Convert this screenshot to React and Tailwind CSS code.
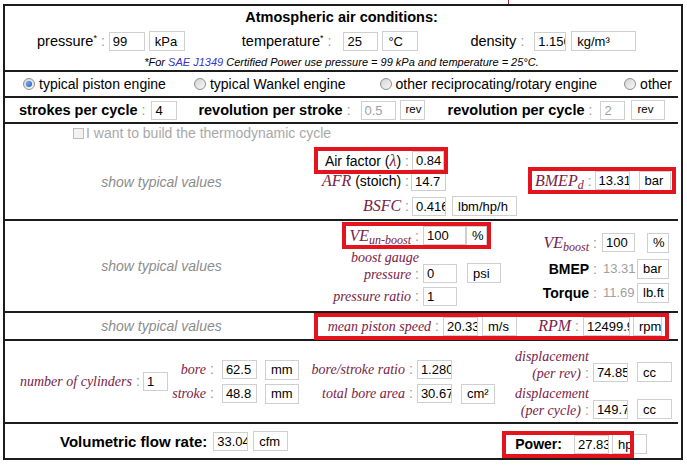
import React from 'react'

const LINE = 'border-b-2 border-[#1c1c1c]'
const SERIF = "font-['Liberation_Serif',serif] italic text-[#7b2145]"
const MATH = "font-['Liberation_Serif',serif] text-[16px] italic text-[#7b2145]"
const HINT = 'italic text-[#8c8c8c]'
const RED = 'outline-4 outline-[#e3141d]'

// gray separator between a label and its field
function Colon() {
  return <span className="ml-[4px] font-['Liberation_Sans',Arial,sans-serif] text-[14px] font-normal not-italic text-[#9a9a9a]">:</span>
}

function Num({ value, muted, className = '' }) {
  return (
    <input
      readOnly
      value={value}
      className={`h-[19px] shrink-0 border border-[#cfcfcf] bg-white pl-[3px] text-[13px] outline-none ${muted ? 'text-[#a0a0a0]' : 'text-black'} ${className}`}
    />
  )
}

function Unit({ children, small, className = '' }) {
  return (
    <span
      className={`flex h-[20px] shrink-0 items-center border border-[#cfcfcf] bg-white pl-[5px] text-black ${small ? 'text-[11.5px]' : 'text-[13px]'} ${className}`}
    >
      {children}
    </span>
  )
}

function Radio({ on, className = '' }) {
  return (
    <span className={`flex h-[12px] w-[12px] shrink-0 items-center justify-center rounded-full border border-[#8e8f8f] bg-[linear-gradient(135deg,#d4d4d4,#f8f8f8)] ${className}`}>
      {on && <span className="h-[6px] w-[6px] rounded-full bg-[radial-gradient(circle_at_35%_35%,#6fa8f0,#1d55b0)]" />}
    </span>
  )
}

function AirConditions() {
  return (
    <section className={`h-[66px] ${LINE}`}>
      <div className="flex h-[22px] items-center justify-center text-[14.5px] font-bold">Atmospheric air conditions:</div>
      <div className="flex h-[26px] items-center pl-[32px] text-[14.5px]">
        <span>pressure<sup className="text-[9px]">*</sup></span>
        <Colon />
        <Num value="99" className="ml-[4px] w-[36px]" />
        <Unit className="ml-[4px] w-[36px]">kPa</Unit>
        <span className="ml-[57px]">temperature<sup className="text-[9px]">*</sup></span>
        <Colon />
        <Num value="25" className="ml-[12px] w-[35px]" />
        <Unit className="ml-[4px] w-[36px]">°C</Unit>
        <span className="ml-[52px]">density</span>
        <Colon />
        <Num value="1.156" className="ml-[10px] w-[32px]" />
        <Unit className="ml-[5px] w-[65px]">kg/m³</Unit>
      </div>
      <p className="text-center text-[11px] italic leading-[16px]">
        *For <span className="text-[#3434c8]">SAE J1349</span> Certified Power use pressure = 99 kPa and temperature = 25°C.
      </p>
    </section>
  )
}

function EngineType() {
  return (
    <section className={`flex h-[26px] items-center pl-[18px] ${LINE}`}>
      <Radio on />
      <span className="ml-[4px]">typical piston engine</span>
      <Radio className="ml-[28px]" />
      <span className="ml-[4px]">typical Wankel engine</span>
      <Radio className="ml-[34px]" />
      <span className="ml-[4px]">other reciprocating/rotary engine</span>
      <Radio className="ml-[27px]" />
      <span className="ml-[4px]">other</span>
    </section>
  )
}

function Strokes() {
  return (
    <section className={`flex h-[26px] items-center pl-[14px] text-[14.5px] ${LINE}`}>
      <b>strokes per cycle</b>
      <Colon />
      <Num value="4" className="ml-[6px] w-[26px]" />
      <b className="ml-[21px]">revolution per stroke</b>
      <Colon />
      <Num value="0.5" muted className="ml-[10px] w-[35px]" />
      <Unit small className="ml-[4px] w-[25px]">rev</Unit>
      <b className="ml-[23px]">revolution per cycle</b>
      <Colon />
      <Num value="2" muted className="ml-[8px] w-[25px]" />
      <Unit small className="ml-[6px] w-[34px]">rev</Unit>
    </section>
  )
}

function Combustion() {
  return (
    <section className={`h-[97px] ${LINE}`}>
      <div className="flex h-[18px] items-center pl-[68px] text-[#a8a8a8]">
        <span className="h-[11px] w-[11px] border border-[#bdbdbd] bg-[#f2f2f2]" />
        <span className="ml-[2px]">I want to build the thermodynamic cycle</span>
      </div>
      <div className="flex h-[77px]">
        <div className={`flex w-[313px] items-center justify-center pt-[3px] ${HINT}`}>show typical values</div>
        <div className="w-[214px] pt-[9px]">
          <div className={`flex h-[19px] w-fit items-center ${RED}`}>
            <span className="w-[91px] text-right">
              Air factor (<span className={MATH}>λ</span>)<Colon />
            </span>
            <Num value="0.84" className="ml-[3px] w-[32px]" />
          </div>
          <div className="mt-[1px] flex h-[20px] items-center">
            <span className="w-[91px] text-right">
              <span className={MATH}>AFR</span> (stoich)<Colon />
            </span>
            <Num value="14.7" className="ml-[2px] w-[35px]" />
          </div>
          <div className="mt-[5px] flex h-[20px] items-center">
            <span className="w-[91px] text-right">
              <span className={MATH}>BSFC</span>
              <Colon />
            </span>
            <Num value="0.416" className="ml-[3px] w-[34px]" />
            <Unit className="ml-[6px] w-[65px]">lbm/hp/h</Unit>
          </div>
        </div>
        <div className="pt-[29px]">
          <div className={`flex h-[19px] w-[140px] items-center ${RED}`}>
            <span className="ml-[3px] whitespace-nowrap">
              <span className={MATH}>
                BMEP<sub>d</sub>
              </span>
              <Colon />
            </span>
            <Num value="13.31" className="ml-[3px] w-[35px]" />
            <Unit className="ml-[9px] w-[32px]">bar</Unit>
          </div>
        </div>
      </div>
    </section>
  )
}

function Boost() {
  return (
    <section className={`flex h-[92px] ${LINE}`}>
      <div className={`flex w-[313px] items-center justify-center ${HINT}`}>show typical values</div>
      <div className="w-[202px] pt-[5px]">
        <div className={`ml-[28px] flex h-[19px] w-[141px] items-center ${RED}`}>
          <span className="w-[73px] whitespace-nowrap text-right">
            <span className={MATH}>
              VE<sub>un-boost</sub>
            </span>
            <Colon />
          </span>
          <Num value="100" className="ml-[4px] w-[43px]" />
          <Unit className="w-[21px]">%</Unit>
        </div>
        <div className="mt-[4px] flex items-end">
          <span className={`w-[101px] text-right leading-[17px] ${SERIF}`}>
            boost gauge
            <br />
            pressure
            <Colon />
          </span>
          <Num value="0" className="ml-[4px] w-[34px]" />
          <Unit className="ml-[10px] w-[34px]">psi</Unit>
        </div>
        <div className="mt-[4px] flex h-[19px] items-center">
          <span className={`w-[101px] text-right ${SERIF}`}>
            pressure ratio
            <Colon />
          </span>
          <Num value="1" className="ml-[4px] w-[34px]" />
        </div>
      </div>
      <div className="pt-[12px]">
        <div className="flex h-[19px] items-center">
          <span className="w-[77px] whitespace-nowrap text-right">
            <span className={MATH}>
              VE<sub>boost</sub>
            </span>
            <Colon />
          </span>
          <Num value="100" className="ml-[5px] w-[33px]" />
          <Unit className="ml-[12px] w-[22px]">%</Unit>
        </div>
        <div className="mt-[7px] flex h-[19px] items-center">
          <span className="w-[77px] text-right">
            <b>BMEP</b>
            <Colon />
          </span>
          <span className="ml-[5px] w-[35px] pl-[1px] text-[13px] text-[#a0a0a0]">13.31</span>
          <Unit className="w-[32px]">bar</Unit>
        </div>
        <div className="mt-[5px] flex h-[19px] items-center">
          <span className="w-[77px] text-right">
            <b>Torque</b>
            <Colon />
          </span>
          <span className="ml-[5px] w-[33px] overflow-hidden whitespace-nowrap pl-[1px] text-[13px] text-[#a0a0a0]">11.69</span>
          <Unit className="ml-[2px] w-[32px]">lb.ft</Unit>
        </div>
      </div>
    </section>
  )
}

function Speed() {
  return (
    <section className={`flex h-[28px] items-center ${LINE}`}>
      <div className={`w-[313px] text-center ${HINT}`}>show typical values</div>
      <div className={`flex h-[19px] w-[347px] items-center ${RED}`}>
        <span className={`w-[121px] text-right ${SERIF}`}>
          mean piston speed
          <Colon />
        </span>
        <Num value="20.33" className="ml-[4px] w-[35px]" />
        <Unit className="ml-[4px] w-[35px]">m/s</Unit>
        <span className="w-[62px] text-right">
          <span className={MATH}>RPM</span>
          <Colon />
        </span>
        <Num value="12499.9" className="ml-[4px] w-[47px]" />
        <Unit className="ml-[3px] w-[29px]">rpm</Unit>
      </div>
    </section>
  )
}

function Geometry() {
  return (
    <section className={`flex h-[83px] ${LINE}`}>
      <div className="flex items-center pl-[15px]">
        <span className={SERIF}>
          number of cylinders
          <Colon />
        </span>
        <Num value="1" className="ml-[3px] w-[25px]" />
      </div>
      <div className="flex flex-col justify-center gap-[4px]">
        <div className="flex h-[20px] items-center">
          <span className={`w-[46px] text-right ${SERIF}`}>
            bore
            <Colon />
          </span>
          <Num value="62.5" className="ml-[8px] w-[35px]" />
          <Unit className="ml-[8px] w-[34px]">mm</Unit>
        </div>
        <div className="flex h-[20px] items-center">
          <span className={`w-[46px] text-right ${SERIF}`}>
            stroke
            <Colon />
          </span>
          <Num value="48.8" className="ml-[8px] w-[35px]" />
          <Unit className="ml-[8px] w-[34px]">mm</Unit>
        </div>
      </div>
      <div className="flex flex-col justify-center gap-[4px]">
        <div className="flex h-[20px] items-center">
          <span className={`w-[114px] text-right ${SERIF}`}>
            bore/stroke ratio
            <Colon />
          </span>
          <Num value="1.280" className="ml-[4px] w-[35px]" />
        </div>
        <div className="flex h-[20px] items-center">
          <span className={`w-[114px] text-right ${SERIF}`}>
            total bore area
            <Colon />
          </span>
          <Num value="30.67" className="ml-[4px] w-[35px]" />
          <Unit className="ml-[9px] w-[34px]">cm²</Unit>
        </div>
      </div>
      <div className="flex flex-col gap-[3px] pt-[7px]">
        <div className="flex items-end">
          <span className={`w-[94px] text-right leading-[17px] ${SERIF}`}>
            displacement
            <br />
            (per rev)
            <Colon />
          </span>
          <Num value="74.85" className="ml-[4px] w-[35px]" />
          <Unit className="ml-[9px] w-[35px]">cc</Unit>
        </div>
        <div className="flex items-end">
          <span className={`w-[94px] text-right leading-[17px] ${SERIF}`}>
            displacement
            <br />
            (per cycle)
            <Colon />
          </span>
          <Num value="149.7" className="ml-[4px] w-[35px]" />
          <Unit className="ml-[9px] w-[35px]">cc</Unit>
        </div>
      </div>
    </section>
  )
}

function Output() {
  return (
    <section className="flex h-[34px] items-center">
      <b className="ml-[55px] text-[15px]">Volumetric flow rate:</b>
      <Num value="33.04" className="ml-[6px] w-[35px]" />
      <Unit className="ml-[5px] w-[35px]">cfm</Unit>
      <div className={`ml-[218px] mt-[6px] flex h-[19px] w-[124px] items-center ${RED}`}>
        <b className="ml-[9px]">Power:</b>
        <Num value="27.83" className="ml-[12px] w-[35px]" />
        <Unit className="ml-[3px] w-[35px]">hp</Unit>
      </div>
    </section>
  )
}

export default function App() {
  return (
    <div className="h-[465px] w-[687px] overflow-hidden bg-white font-['Liberation_Sans',Arial,sans-serif] text-[14px] leading-none text-black">
      {/* thin tick above the frame */}
      <div className="ml-[508px] h-[4px] w-px bg-[#8b2b2b]" />
      <div className="ml-[3px] h-[456px] w-[680px] border-2 border-[#1c1c1c]">
        <div className="w-[673px]">
          <AirConditions />
          <EngineType />
          <Strokes />
          <Combustion />
          <Boost />
          <Speed />
          <Geometry />
          <Output />
        </div>
      </div>
    </div>
  )
}
